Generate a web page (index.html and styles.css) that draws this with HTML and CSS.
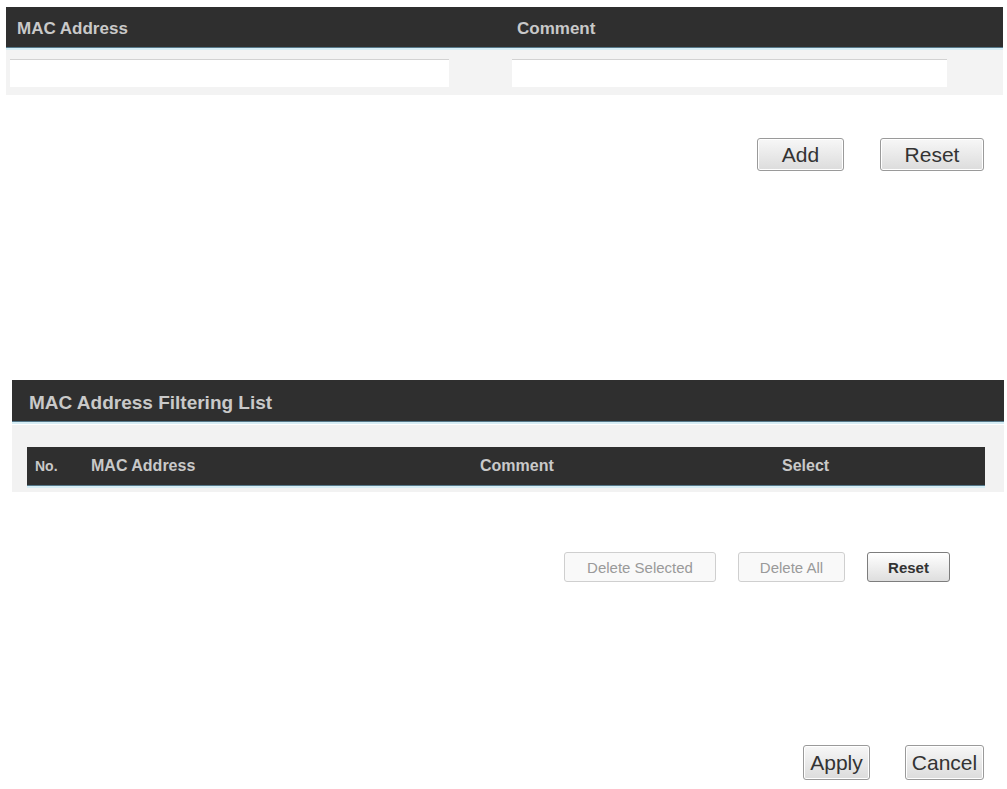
FILE: index.html
```html
<html>
<head>
	<title>MAC Address Filtering</title>
	<meta charset="utf-8" />
	<link rel="stylesheet" href="styles.css">
</head>
<body>
	<div class="entry-form">
		<div class="bar form-head">
			<span class="cell">MAC Address</span>
			<span class="cell">Comment</span>
		</div>
		<div class="form-row">
			<div class="cell"><input class="field field-mac" type="text"></div>
			<div class="cell"><input class="field field-comment" type="text"></div>
		</div>
	</div>
	<div class="button-row top-buttons">
		<button class="btn big btn-add">Add</button>
		<button class="btn big btn-reset">Reset</button>
	</div>

	<div class="filter-list">
		<div class="bar section-head">MAC Address Filtering List</div>
		<div class="list-panel">
			<div class="bar list-head">
				<span class="col-no">No.</span>
				<span class="col-mac">MAC Address</span>
				<span class="col-comment">Comment</span>
				<span class="col-select">Select</span>
			</div>
		</div>
	</div>
	<div class="button-row list-buttons">
		<button class="btn small disabled btn-del-sel">Delete Selected</button>
		<button class="btn small disabled btn-del-all">Delete All</button>
		<button class="btn small strong btn-list-reset">Reset</button>
	</div>

	<div class="button-row bottom-buttons">
		<button class="btn big btn-apply">Apply</button>
		<button class="btn big btn-cancel">Cancel</button>
	</div>
</body>
</html>
```

FILE: styles.css
```css
body {
	margin: 0;
	font-family: "Liberation Sans", Arial, sans-serif;
	background-color: #ffffff;
	color: #333333;
}

/* dark title bars with the pale blue rule underneath */
.bar {
	background-color: #2f2f2f;
	color: #c9c9c9;
	font-weight: bold;
	font-size: 17px;
	border-bottom: 1px solid #56798a;
	box-shadow: 0 2px 0 #d6edf5;
	box-sizing: border-box;
}

.entry-form {
	margin: 7px 4px 0 6px;
}
.form-head {
	display: grid;
	grid-template-columns: 500px 1fr;
	height: 41px;
	align-items: center;
	padding-top: 4px;
}
.form-head > .cell {
	padding-left: 11px;
}
.form-row {
	display: grid;
	grid-template-columns: 500px 1fr;
	background-color: #f3f3f3;
	margin-top: 2px;
	padding: 9px 0 8px 0;
}
.field {
	display: block;
	height: 28px;
	box-sizing: border-box;
	border: none;
	border-top: 1px solid #d2d2d2;
	background-color: #ffffff;
	margin: 0;
}
.field-mac {
	margin-left: 4px;
	width: 439px;
}
.field-comment {
	margin-left: 6px;
	width: 435px;
}

/* buttons */
.button-row {
	display: flex;
	justify-content: flex-end;
}
.btn {
	font-family: "Liberation Sans", Arial, sans-serif;
	box-sizing: border-box;
	border-radius: 3px;
	padding: 0;
	margin: 0;
	cursor: pointer;
}
.big {
	font-size: 21px;
	color: #333333;
	border: 1px solid #9a9a9a;
	background: linear-gradient(180deg, #f7f7f7, #dcdcdc);
	box-shadow: inset 0 0 0 1px #ffffff;
}
.small {
	font-size: 15px;
	height: 30px;
}
.disabled {
	color: #9a9a9a;
	border: 1px solid #cfcfcf;
	background: #f9f9f9;
}
.strong {
	font-weight: bold;
	color: #333333;
	border: 1px solid #7d7d7d;
	background: linear-gradient(180deg, #ffffff, #dedede);
}

.top-buttons {
	margin-top: 43px;
	padding-right: 23px;
	gap: 36px;
}
.btn-add {
	width: 87px;
	height: 33px;
}
.btn-reset {
	width: 104px;
	height: 33px;
}

.filter-list {
	margin: 209px 3px 0 12px;
}
.section-head {
	height: 42px;
	padding: 4px 0 0 17px;
	display: flex;
	align-items: center;
	font-size: 19px;
}
.list-panel {
	background-color: #f2f2f2;
	margin-top: 3px;
	padding: 22px 19px 6px 15px;
}
.list-head {
	display: grid;
	grid-template-columns: 56px 389px 302px 1fr;
	height: 39px;
	align-items: center;
	font-size: 16px;
}
.col-no {
	padding-left: 8px;
	font-size: 14px;
}
.col-mac {
	padding-left: 8px;
}
.col-comment {
	padding-left: 8px;
}
.col-select {
	padding-left: 8px;
}

.list-buttons {
	margin-top: 60px;
	padding-right: 57px;
	gap: 22px;
}
.btn-del-sel {
	width: 152px;
}
.btn-del-all {
	width: 107px;
}
.btn-list-reset {
	width: 83px;
}

.bottom-buttons {
	margin-top: 163px;
	padding-right: 23px;
	gap: 35px;
}
.btn-apply {
	width: 67px;
	height: 35px;
}
.btn-cancel {
	width: 79px;
	height: 35px;
}
```
